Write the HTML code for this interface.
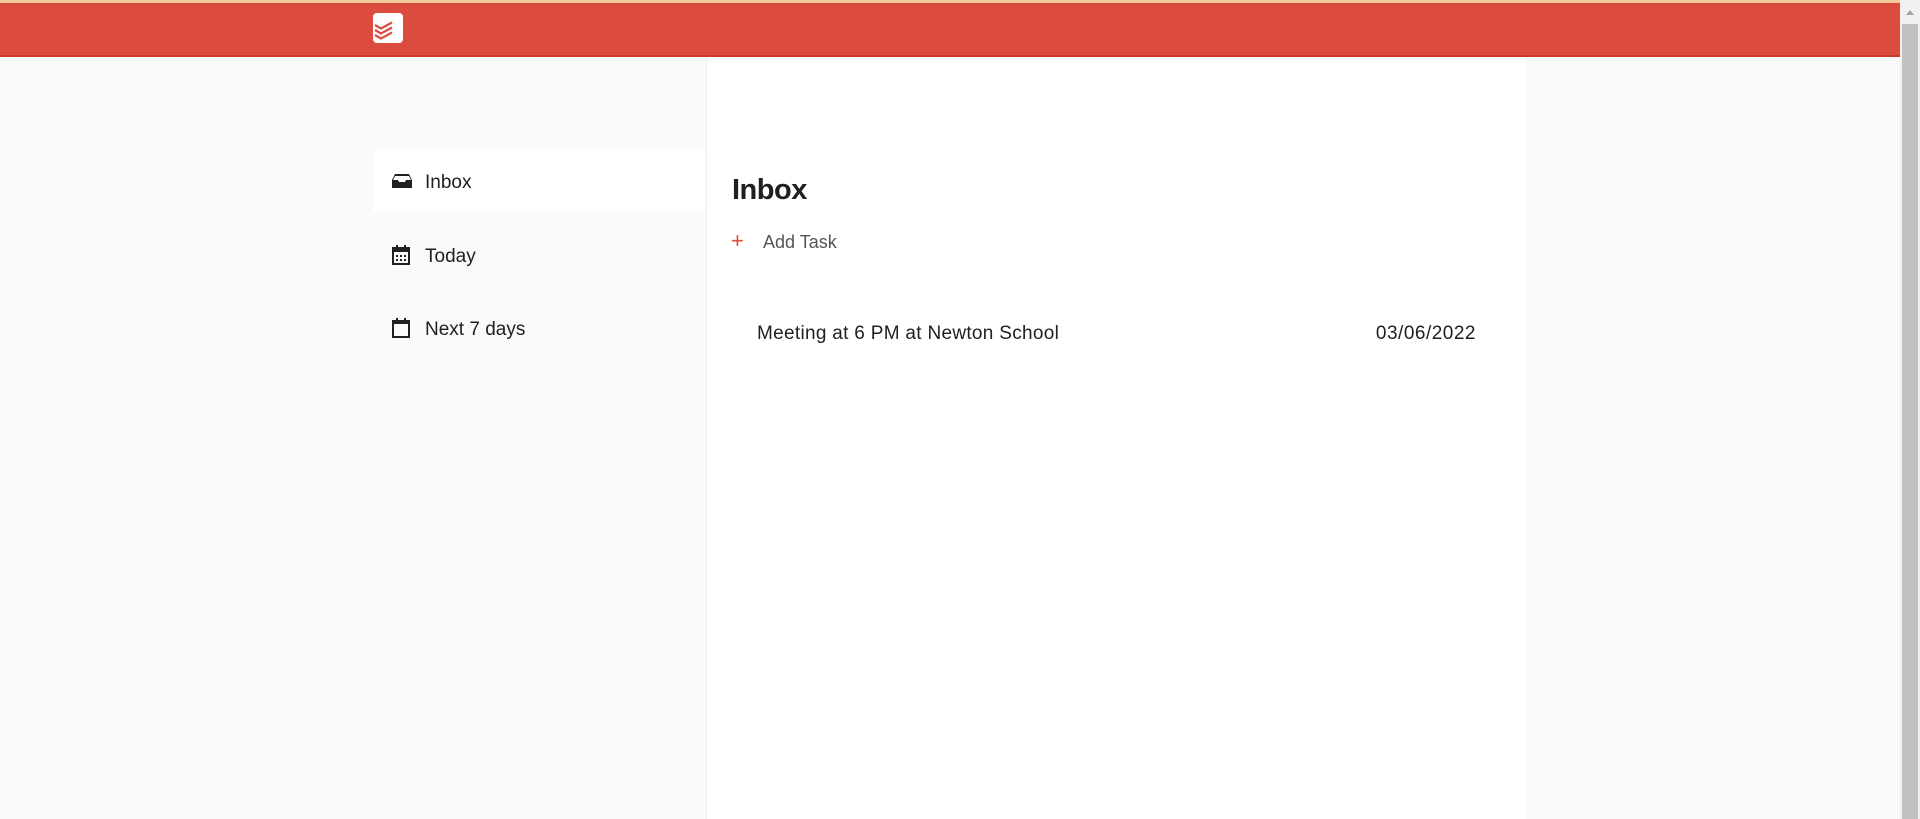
<!DOCTYPE html>
<html><head><style>
*{margin:0;padding:0;box-sizing:border-box}
body{width:1920px;height:819px;overflow:hidden;background:#fafafa;font-family:"Liberation Sans",Arial,sans-serif;position:relative}
.top{position:absolute;left:0;top:0;width:1900px;height:3px;background:#f6c99a}
.hdr{position:absolute;left:0;top:3px;width:1900px;height:54px;background:#db4c3f;border-bottom:2px solid #c93a2c}
.logo{position:absolute;left:373px;top:13px;width:30px;height:30px;background:#fff;border-radius:4px}
.main{position:absolute;left:706px;top:57px;width:820px;height:762px;background:#fff;border-left:1px solid #f0f0f0}
.sb{position:absolute;left:1900px;top:0;width:20px;height:819px;background:#f1f1f1}
.sb .th{position:absolute;left:2px;top:24px;width:16px;height:795px;background:#c1c1c1}
.item{position:absolute;left:373px;width:332px;height:60px;font-size:19px;color:#202020;display:flex;align-items:center}
.item svg{position:absolute;left:18px}
.item span{position:absolute;left:52px;top:21px}
.act{background:#fff}
</style></head><body>
<div class="top"></div>
<div class="hdr"></div>
<div class="logo"><svg width="30" height="30" viewBox="0 0 30 30"><g fill="none" stroke="#db4c3f" stroke-width="2.2"><path d="M2 12l6 3.5 11-6"/><path d="M2 17l6 3.5 11-6"/><path d="M2 22l6 3.5 11-6"/></g></svg></div>
<div class="sb"><div class="th"></div><div style="position:absolute;left:6px;top:10px;width:0;height:0;border-left:4px solid transparent;border-right:4px solid transparent;border-bottom:5px solid #a3a3a3"></div></div>
<div class="item act" style="top:151px"><svg width="22" height="16" viewBox="0 0 22 16"><path d="M4 1h14l3 6v8H1V7z" fill="#202020"/><path d="M4 3h14l2 4h-5l-1 2H8L7 7H2z" fill="#fff"/></svg><span>Inbox</span></div>
<div class="item" style="top:225px"><svg width="20" height="22" viewBox="0 0 20 22"><rect x="2" y="4" width="16" height="16" fill="none" stroke="#202020" stroke-width="2"/><rect x="2" y="4" width="16" height="4" fill="#202020"/><rect x="5" y="1" width="2" height="4" fill="#202020"/><rect x="13" y="1" width="2" height="4" fill="#202020"/><g fill="#202020"><rect x="5" y="11" width="2" height="2"/><rect x="9" y="11" width="2" height="2"/><rect x="13" y="11" width="2" height="2"/><rect x="5" y="15" width="2" height="2"/><rect x="9" y="15" width="2" height="2"/><rect x="13" y="15" width="2" height="2"/></g></svg><span>Today</span></div>
<div class="item" style="top:298px"><svg width="20" height="22" viewBox="0 0 20 22"><rect x="2" y="4" width="16" height="16" fill="none" stroke="#202020" stroke-width="2"/><rect x="2" y="4" width="16" height="3" fill="#202020"/><rect x="5" y="1" width="2" height="4" fill="#202020"/><rect x="13" y="1" width="2" height="4" fill="#202020"/></svg><span>Next 7 days</span></div>
<div class="main">
<div style="position:absolute;left:25px;top:117px;font-size:29px;font-weight:bold;color:#202020;letter-spacing:-0.5px">Inbox</div>
<div style="position:absolute;left:24px;top:171px;font-size:22px;color:#db4c3f">+</div>
<div style="position:absolute;left:56px;top:175px;font-size:18px;color:#555">Add Task</div>
<div style="position:absolute;left:50px;top:266px;font-size:19px;color:#202020;letter-spacing:0.3px">Meeting at 6 PM at Newton School</div>
<div style="position:absolute;right:50px;top:266px;font-size:19px;color:#202020;letter-spacing:0.5px">03/06/2022</div>
</div>
</body></html>
